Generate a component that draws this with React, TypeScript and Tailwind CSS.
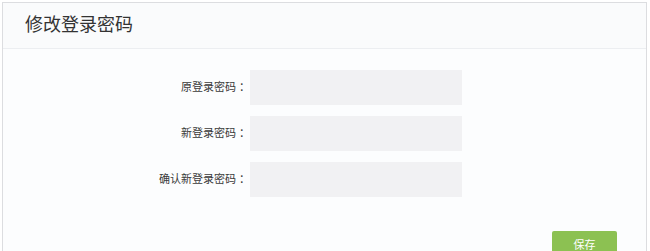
export default function App() {
  const rows = ["原登录密码 ：", "新登录密码 ：", "确认新登录密码 ："];

  return (
    <div
      className="h-[251px] w-[650px] overflow-hidden bg-white pl-[2px] pr-[3px] pt-[2px]"
      style={{ fontFamily: '"Liberation Sans", "Noto Sans CJK SC", sans-serif' }}
    >
      <div className="h-[260px] border border-[#dcdde0] bg-[#fcfdfe]">
        <div className="flex h-[46px] items-center border-b border-[#eceef1] bg-[#fafbfc] pl-[22px]">
          <h1 className="text-[18px] font-normal text-[#333]">修改登录密码</h1>
        </div>
        <div className="flex flex-col gap-[11px] pt-[21px]">
          {rows.map((label) => (
            <div className="flex items-center" key={label}>
              <label className="w-[247px] text-right text-[11px] text-[#3a3a3a]">
                {label}
              </label>
              <input
                className="h-[35px] w-[212px] bg-[#f1f1f3] outline-none"
                type="password"
              />
            </div>
          ))}
        </div>
        <div className="flex justify-end pr-[29px] pt-[34px]">
          <button
            className="h-[28px] w-[65px] rounded-[2px] bg-[#8cc152] text-[11px] text-white"
            type="button"
          >
            保存
          </button>
        </div>
      </div>
    </div>
  );
}
